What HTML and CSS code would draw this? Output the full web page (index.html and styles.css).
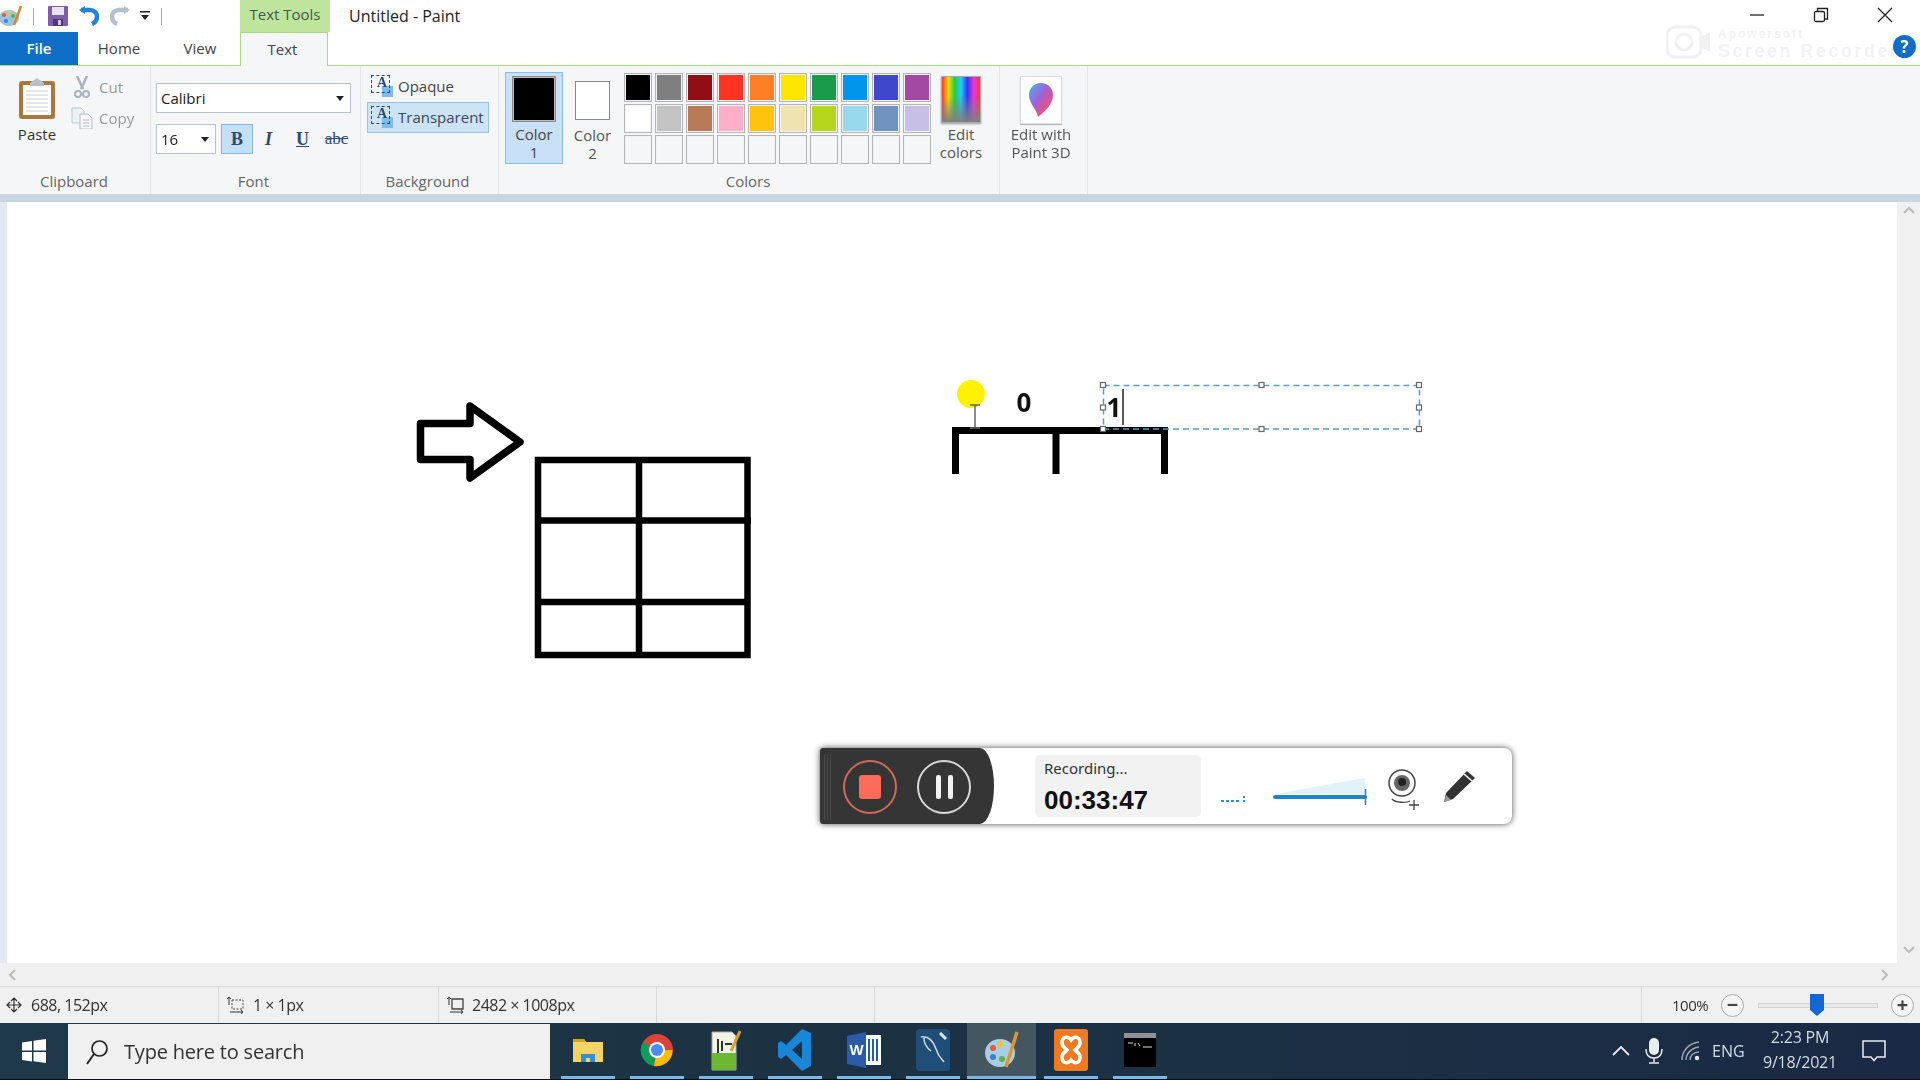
FILE: index.html
```html
<!DOCTYPE html>
<html lang="en">
<head>
<meta charset="utf-8">
<title>Untitled - Paint</title>
<link rel="stylesheet" href="styles.css">
</head>
<body>
<div class="app">
  <header class="titlebar">
    <div class="qat">
      <svg class="qi-paint" width="24" height="24" viewBox="0 0 24 24"><ellipse cx="10" cy="14" rx="10" ry="8" fill="#9cc3e0"/><circle cx="5" cy="11" r="2" fill="#e8563c"/><circle cx="10" cy="9" r="2" fill="#f2c230"/><circle cx="14" cy="12" r="2" fill="#5fb04a"/><circle cx="7" cy="17" r="2" fill="#3f7fd0"/><path d="M15 21 22 2" stroke="#d9882b" stroke-width="2.5"/></svg>
      <i class="qsep"></i>
      <svg class="qi-save" width="20" height="20" viewBox="0 0 20 20"><rect width="20" height="20" rx="1" fill="#7e5cae"/><rect x="4" y="1" width="12" height="8" fill="#e8e4f2"/><rect x="5" y="13" width="10" height="7" fill="#4e3a72"/><rect x="10" y="14" width="3" height="5" fill="#cfc8e0"/></svg>
      <svg class="qi-undo" width="20" height="20" viewBox="0 0 20 20"><path d="M2 4h9c4 0 7 3 7 6.500 0 3-2 6-5 7.500" fill="none" stroke="#2283dc" stroke-width="4.500"/><path d="M0 4 6 0v8z" fill="#2283dc"/></svg>
      <svg class="qi-redo" width="20" height="20" viewBox="0 0 20 20"><path d="M18 4H9C5 4 2 7 2 10.500c0 3 2 6 5 7.500" fill="none" stroke="#b4c0cc" stroke-width="4.500"/><path d="M20 4 14 0v8z" fill="#b4c0cc"/></svg>
      <svg class="qi-drop" width="10" height="11" viewBox="0 0 10 11"><rect y="0" width="10" height="1.500" fill="#222"/><path d="M1 4h8l-4 5z" fill="#222"/></svg>
      <i class="qsep qsep-b"></i>
    </div>
    <div class="context">Text Tools</div>
    <div class="doc-title">Untitled - Paint</div>
    <div class="winbtns">
      <svg width="16" height="16" viewBox="0 0 16 16"><path d="M1 8h14" stroke="#222" stroke-width="1.300"/></svg>
      <svg width="16" height="16" viewBox="0 0 16 16"><rect x="1.500" y="4.500" width="10" height="10" rx="1.500" fill="none" stroke="#222" stroke-width="1.300"/><path d="M4.500 4V1.500h10V12H12" fill="none" stroke="#222" stroke-width="1.300"/></svg>
      <svg width="16" height="16" viewBox="0 0 16 16"><path d="M1 1l14 14M15 1 1 15" stroke="#222" stroke-width="1.300"/></svg>
    </div>
  </header>

  <nav class="tabs">
    <div class="tab tab-file">File</div>
    <div class="tab tab-home">Home</div>
    <div class="tab tab-view">View</div>
    <div class="tab tab-text">Text</div>
    <div class="watermark"><svg width="46" height="38" viewBox="0 0 46 38"><rect x="1" y="2" width="34" height="30" rx="8" fill="none" stroke="#f1f1f1" stroke-width="3"/><circle cx="18" cy="17" r="8" fill="none" stroke="#f1f1f1" stroke-width="3"/><path d="M35 12l9-5v20l-9-5z" fill="#f1f1f1"/></svg><div class="wm-text"><span class="wm-a">Apowersoft</span><span class="wm-b">Screen Recorder</span></div></div>
    <div class="help">?</div>
  </nav>

  <section class="ribbon">
    <div class="group g-clip">
      <div class="gbody">
        <div class="paste">
          <svg width="38" height="42" viewBox="0 0 38 42"><rect x="1" y="4" width="36" height="38" rx="3" fill="#a9773f"/><rect x="5" y="8" width="28" height="30" fill="#fff"/><path d="M8 14h22M8 18h22M8 22h22M8 26h22M8 30h22M8 34h22" stroke="#c9ced6"/><path d="M12 6l7-5 7 5v3H12z" fill="#b9bec6"/></svg>
          <span>Paste</span>
        </div>
        <div class="clipcol">
          <div class="cliprow"><svg width="16" height="22" viewBox="0 0 16 22"><path d="M3 0l6 13M13 0 7 13" stroke="#aab4c0" stroke-width="2.500"/><circle cx="4" cy="18" r="3" fill="none" stroke="#aab4c0" stroke-width="2"/><circle cx="12" cy="18" r="3" fill="none" stroke="#aab4c0" stroke-width="2"/></svg><span>Cut</span></div>
          <div class="cliprow"><svg width="22" height="22" viewBox="0 0 22 22"><path d="M1 1h9l3 3v12H1z" fill="#eef1f5" stroke="#c0c8d2"/><path d="M9 7h8l4 4v11H9z" fill="#f6f7f9" stroke="#b4bcc8"/><path d="M12 13h6M12 16h6M12 19h6" stroke="#b4bcc8"/></svg><span>Copy</span></div>
        </div>
      </div>
      <div class="glabel">Clipboard</div>
    </div>

    <div class="group g-font">
      <div class="gbody gbody-col">
        <div class="combo combo-font"><span>Calibri</span><i class="caret"></i></div>
        <div class="fontrow">
          <div class="combo combo-size"><span>16</span><i class="caret"></i></div>
          <div class="fmt fmt-on fmt-b">B</div>
          <div class="fmt fmt-i">I</div>
          <div class="fmt fmt-u">U</div>
          <div class="fmt fmt-s">abc</div>
        </div>
      </div>
      <div class="glabel glabel-font">Font</div>
    </div>

    <div class="group g-bg">
      <div class="gbody gbody-col">
        <div class="bgrow"><span class="aicon">A</span><span>Opaque</span></div>
        <div class="bgrow bgrow-on"><span class="aicon">A</span><span>Transparent</span></div>
      </div>
      <div class="glabel glabel-bg">Background</div>
    </div>

    <div class="group g-colors">
      <div class="gbody">
        <div class="colbtn colbtn-on"><i class="sw sw-1"></i><span>Color<br>1</span></div>
        <div class="colbtn"><i class="sw sw-2"></i><span>Color<br>2</span></div>
        <div class="palette">
          <i class="c p1"></i><i class="c p2"></i><i class="c p3"></i><i class="c p4"></i><i class="c p5"></i><i class="c p6"></i><i class="c p7"></i><i class="c p8"></i><i class="c p9"></i><i class="c p10"></i>
          <i class="c p11"></i><i class="c p12"></i><i class="c p13"></i><i class="c p14"></i><i class="c p15"></i><i class="c p16"></i><i class="c p17"></i><i class="c p18"></i><i class="c p19"></i><i class="c p20"></i>
          <i class="c"></i><i class="c"></i><i class="c"></i><i class="c"></i><i class="c"></i><i class="c"></i><i class="c"></i><i class="c"></i><i class="c"></i><i class="c"></i>
        </div>
        <div class="editcol"><i class="rainbow"></i><span>Edit<br>colors</span></div>
      </div>
      <div class="glabel">Colors</div>
    </div>

    <div class="group g-3d">
      <div class="gbody">
        <div class="editcol edit3d">
          <div class="box3d"><svg width="26" height="36" viewBox="0 0 26 36"><defs><linearGradient id="drop" x1="0" y1="0" x2="1" y2="1"><stop offset="0" stop-color="#3fb4ee"/><stop offset=".45" stop-color="#a45fd6"/><stop offset=".75" stop-color="#f0507a"/><stop offset="1" stop-color="#f7a83a"/></linearGradient></defs><path d="M13 1C6 1 1 6 1 13c0 9 8 14 9 22 5-4 15-12 15-22C25 6 20 1 13 1z" fill="url(#drop)"/></svg></div>
          <span>Edit with<br>Paint 3D</span>
        </div>
      </div>
    </div>
  </section>
  <div class="ribbon-foot"></div>

  <main class="workspace">
    <div class="leftstrip"></div>
    <div class="canvas">
      <svg class="drawing" width="1890" height="761" viewBox="7 202 1890 761">
        <g fill="none" stroke="#000">
          <path d="M420.500 423.500H470V406l50 36-50 36v-18.500h-49.500z" stroke-width="7.500" stroke-linejoin="round"/>
          <path d="M538 460h209.500v195H538z" stroke-width="6.500"/>
          <path d="M639 460v195M538 520.500h213M541 602h206" stroke-width="6.500"/>
          <path d="M955.500 474V430.500h209V474M1056 430v44" stroke-width="7"/>
        </g>
        <circle cx="971" cy="394" r="14" fill="#fff200"/>
        <path d="M970 405h10M975 405v22M970 428h10" stroke="#666" stroke-width="1.500" fill="none"/>
        <text class="canvas-num" x="1024" y="412" text-anchor="middle">0</text>
        <text class="canvas-num" x="1114" y="417" text-anchor="middle">1</text>
        <path d="M1123 389v36" stroke="#222" stroke-width="1.500"/>
        <rect x="1103.500" y="385.500" width="316" height="43.500" fill="none" stroke="#5d9cc0" stroke-width="1.500" stroke-dasharray="6 4"/>
        <g fill="#fff" stroke="#666" stroke-width="1.200">
          <rect x="1100.500" y="382.500" width="5" height="5"/><rect x="1259" y="382.500" width="5" height="5"/><rect x="1416.500" y="382.500" width="5" height="5"/>
          <rect x="1100.500" y="405" width="5" height="5"/><rect x="1416.500" y="405" width="5" height="5"/>
          <rect x="1100.500" y="426.500" width="5" height="5"/><rect x="1259" y="426.500" width="5" height="5"/><rect x="1416.500" y="426.500" width="5" height="5"/>
        </g>
      </svg>
      <aside class="recorder">
        <div class="rec-dark">
          <i class="rec-grip"></i>
          <div class="rec-btn rec-stop"><i></i></div>
          <div class="rec-btn rec-pause"><i></i><i></i></div>
        </div>
        <div class="rec-info">
          <div class="rec-status">Recording...</div>
          <div class="rec-time">00:33:47</div>
        </div>
        <svg class="rec-tools" width="296" height="76" viewBox="1216 748 296 76">
          <path d="M1221 801h3M1226 801h3M1231 801h3M1236 801h3M1244 800v2M1244 796v2" stroke="#2a8fd0" stroke-width="2"/>
          <path d="M1275 794l90-16v16z" fill="#e3f1fa"/>
          <path d="M1275 797h90" stroke="#1a85c9" stroke-width="4" stroke-linecap="round"/>
          <path d="M1365.500 789v16" stroke="#1a85c9" stroke-width="1.500"/>
          <circle cx="1402" cy="783" r="13" fill="none" stroke="#444" stroke-width="1.500"/>
          <circle cx="1402" cy="783" r="8" fill="#666"/><circle cx="1402" cy="782" r="4" fill="#222"/>
          <path d="M1392 799c3 4 15 4 18 2M1409 805h10M1414 800v10" fill="none" stroke="#444" stroke-width="1.300"/>
          <path d="M1444 802l2-9 21-22 8 7-22 21z" fill="#333"/><path d="M1464 774l8 7" stroke="#fff" stroke-width="1.500"/><path d="M1444 802l2-7 5 5z" fill="#999"/>
        </svg>
      </aside>
    </div>
    <div class="vscroll">
      <svg width="12" height="8" viewBox="0 0 12 8"><path d="M1 7l5-5 5 5" fill="none" stroke="#bbb" stroke-width="2"/></svg>
      <svg width="12" height="8" viewBox="0 0 12 8"><path d="M1 1l5 5 5-5" fill="none" stroke="#bbb" stroke-width="2"/></svg>
    </div>
  </main>

  <div class="hscroll">
    <svg width="8" height="12" viewBox="0 0 8 12"><path d="M7 1 2 6l5 5" fill="none" stroke="#bbb" stroke-width="2"/></svg>
    <svg width="8" height="12" viewBox="0 0 8 12"><path d="M1 1l5 5-5 5" fill="none" stroke="#bbb" stroke-width="2"/></svg>
  </div>

  <footer class="status">
    <div class="st st-pos"><svg width="16" height="16" viewBox="0 0 16 16"><path d="M8 1v14M1 8h14M5 4l3-3 3 3M5 12l3 3 3-3M4 5 1 8l3 3M12 5l3 3-3 3" fill="none" stroke="#333" stroke-width="1.200"/></svg><span>688, 152px</span></div>
    <div class="st st-sel"><svg width="18" height="18" viewBox="0 0 18 18"><path d="M5 4h11v9H5z" fill="none" stroke="#444" stroke-dasharray="2 1.500"/><path d="M2 1v8M0 3l2-2 2 2M3 16h13M14 14l2 2-2 2" fill="none" stroke="#333"/></svg><span>1 × 1px</span></div>
    <div class="st st-size"><svg width="18" height="18" viewBox="0 0 18 18"><path d="M5 3h11v10H5z" fill="none" stroke="#444" stroke-width="1.300"/><path d="M2 1v8M0 3l2-2 2 2M3 16h13M14 14l2 2-2 2" fill="none" stroke="#333"/></svg><span>2482 × 1008px</span></div>
    <div class="st st-blank"></div>
    <div class="st st-zoom">
      <span class="zoomtxt">100%</span>
      <div class="zbtn">−</div>
      <div class="zslider"><svg class="zthumb" width="14" height="24" viewBox="0 0 14 24"><path d="M0 1h14v16l-7 6-7-6z" fill="#1468d6"/></svg></div>
      <div class="zbtn">+</div>
    </div>
  </footer>

  <div class="taskbar">
    <div class="startbtn"><svg width="24" height="24" viewBox="0 0 24 24"><path d="M0 3.500 10 2v9.500H0zM11.500 1.800 24 0v11.500H11.500zM0 13h10v9.500L0 21zM11.500 13H24v11l-12.500-1.800z" fill="#fff"/></svg></div>
    <div class="searchbox"><svg width="24" height="26" viewBox="0 0 24 26"><circle cx="14.500" cy="9.500" r="7.500" fill="none" stroke="#222" stroke-width="1.700"/><path d="M9 15 2 25" stroke="#222" stroke-width="1.900"/></svg><span>Type here to search</span></div>
    <div class="task">
      <svg width="32" height="32" viewBox="0 0 32 32"><path d="M1 5h11l2 3h17v20H1z" fill="#f6d365"/><path d="M1 5h11l2 3H1z" fill="#d9a322"/><path d="M9 28v-8h14v8h-5v-4h-4v4z" fill="#2f8fd8"/></svg>
    </div>
    <div class="task">
      <svg width="34" height="36" viewBox="0 0 34 34"><circle cx="17" cy="17" r="16" fill="#db4437"/><path d="M17 17 3 9A16 16 0 0 0 14 33z" fill="#0f9d58"/><path d="M17 17h15.500A16 16 0 0 1 14 33z" fill="#fbbc05"/><circle cx="17" cy="17" r="8" fill="#fff"/><circle cx="17" cy="17" r="6" fill="#4a8cf0"/></svg>
    </div>
    <div class="task">
      <svg width="30" height="42" viewBox="0 0 30 42"><path d="M1 3h20l4 4v34H1z" fill="#f2f4e8" stroke="#aaa"/><path d="M1 24h24v17H1z" fill="#6cb832"/><path d="M7 10v14M11 12v10M14 15h7" stroke="#333" stroke-width="2"/><path d="M20 22 29 2" stroke="#d8a02a" stroke-width="3"/></svg>
    </div>
    <div class="task">
      <svg width="34" height="42" viewBox="0 0 34 42"><path d="M24 0l9 4v33l-9 5L8 26 3 30l-3-2V14l3-2 5 4zM24 12l-10 9 10 9z" fill="#1a86d8"/></svg>
    </div>
    <div class="task">
      <svg width="34" height="36" viewBox="0 0 34 36"><rect x="12" y="3" width="22" height="30" fill="#fff"/><path d="M18 7v22M22 7v22M26 7v22M30 7v22" stroke="#2a5caa" stroke-width="2"/><path d="M0 4 19 0v36L0 32z" fill="#2a5caa"/><text class="word-w" x="9.500" y="23" text-anchor="middle">W</text></svg>
    </div>
    <div class="task">
      <svg width="34" height="42" viewBox="0 0 34 42"><rect width="34" height="42" rx="4" fill="#1f4f78"/><path d="M5 8c7-1 12 3 15 12s6 10 8 13M8 9c0 6 3 10 7 13" fill="none" stroke="#cfdbe6" stroke-width="1.500"/><path d="M24 4l6 6" stroke="#dfe7ee" stroke-width="3"/></svg>
    </div>
    <div class="task task-on">
      <svg width="34" height="42" viewBox="0 0 34 42"><ellipse cx="15" cy="24" rx="15" ry="14" fill="#a9cde4"/><circle cx="8" cy="19" r="3" fill="#e8563c"/><circle cx="15" cy="15" r="3" fill="#f2c230"/><circle cx="8" cy="28" r="3" fill="#3f7fd0"/><circle cx="17" cy="30" r="3" fill="#5fb04a"/><path d="M21 38 32 3" stroke="#e0962f" stroke-width="3.500"/></svg>
    </div>
    <div class="task">
      <svg width="34" height="42" viewBox="0 0 34 42"><rect width="34" height="42" rx="3" fill="#f07a22"/><path d="M8 14c0-7 6-7 9-3 3-4 9-4 9 3 0 4-4 6-5 7 1 1 5 3 5 7 0 7-6 7-9 3-3 4-9 4-9-3 0-4 4-6 5-7-1-1-5-3-5-7z" fill="none" stroke="#fff" stroke-width="3.500"/></svg>
    </div>
    <div class="task">
      <svg width="32" height="34" viewBox="0 0 32 34"><rect width="32" height="34" fill="#000"/><rect width="32" height="5" fill="#8e9296"/><path d="M4 10h5M11 10v3M14 10l2 3M19 14h9" stroke="#ddd"/></svg>
    </div>
    <div class="tray">
      <svg class="t-up" width="20" height="12" viewBox="0 0 20 12"><path d="M2 10l8-8 8 8" fill="none" stroke="#e8edf2" stroke-width="1.800"/></svg>
      <svg class="t-mic" width="18" height="26" viewBox="0 0 18 26"><rect x="4" y="0" width="10" height="17" rx="5" fill="#e8edf2"/><path d="M1 11c0 6 3 9 8 9s8-3 8-9M9 20v4M4 25h10" fill="none" stroke="#e8edf2" stroke-width="1.500"/></svg>
      <svg class="t-wifi" width="20" height="20" viewBox="0 0 20 20"><path d="M1 19C1 10 8 2 18 1M5 19c0-6 5-12 13-13M9 19c0-4 3-8 9-8" fill="none" stroke="#9aa6b2" stroke-width="1.500"/><circle cx="16" cy="17" r="2.200" fill="#e8edf2"/></svg>
      <span class="t-eng">ENG</span>
      <div class="t-clock"><span>2:23 PM</span><span>9/18/2021</span></div>
      <svg class="t-note" width="24" height="22" viewBox="0 0 24 22"><path d="M1 1h22v16H15l-3 3.500L9 17H1z" fill="none" stroke="#e8edf2" stroke-width="1.500"/></svg>
    </div>
  </div>
</div>
</body>
</html>
```
FILE: styles.css
```css
* { box-sizing: border-box; }
html, body { margin: 0; height: 100%; overflow: hidden; background: #fff; }
body { font-family: "Open Sans", "Noto Sans", sans-serif; color: #333; }
i { display: block; font-style: normal; }
svg { display: block; flex: none; }

.app { width: 1920px; height: 1080px; display: flex; flex-direction: column; filter: blur(0.6px); }

/* title bar */
.titlebar { height: 32px; display: flex; background: #fff; flex: none; }
.qat { width: 240px; display: flex; align-items: center; }
.qi-paint { margin-left: -1px; }
.qsep { width: 1px; height: 17px; background: #a8a8a8; margin-left: 10px; }
.qi-save { margin-left: 14px; }
.qi-undo { margin-left: 11px; }
.qi-redo { margin-left: 11px; }
.qi-drop { margin-left: 10px; }
.qsep-b { margin-left: 11px; }
.context { width: 90px; background: #bfe59c; color: #3f5a48; font-size: 15px; display: flex; align-items: center; justify-content: center; padding-bottom: 4px; }
.doc-title { margin-left: 19px; font-size: 16px; line-height: 32px; color: #222; }
.winbtns { margin-left: auto; display: flex; gap: 48px; padding: 7px 27px 0 0; height: 32px; }

/* tabs */
.tabs { height: 33px; display: flex; position: relative; background: #fff; flex: none; }
.tab { font-size: 15px; line-height: 33px; text-align: center; color: #444; }
.tab-file { width: 78px; background: #0f6fc6; color: #fff; font-weight: 600; }
.tab-home { width: 82px; }
.tab-view { width: 80px; }
.tab-text { width: 88px; background: #f5f6f7; border: 1px solid #a9d98a; border-bottom: 0; position: relative; z-index: 1; margin-bottom: -1px; height: 34px; padding-right: 3px; }
.watermark { position: absolute; left: 1666px; top: -7px; display: flex; gap: 6px; }
.wm-text { display: flex; flex-direction: column; color: #f2f2f2; font-family: "Liberation Sans", sans-serif; font-weight: 700; padding-top: 2px; }
.wm-a { font-size: 12px; line-height: 14px; letter-spacing: 2px; }
.wm-b { font-size: 18px; line-height: 21px; letter-spacing: 2.500px; white-space: nowrap; }
.help { position: absolute; left: 1893px; top: 3px; width: 23px; height: 23px; border-radius: 50%; background: #0f6fc6; color: #fff; font-weight: 700; font-size: 17px; line-height: 23px; text-align: center; }

/* ribbon */
.ribbon { height: 129px; background: #f5f6f7; border-top: 1px solid #a9d98a; display: flex; flex: none; font-size: 15px; }
.ribbon-foot { height: 8px; background: #c9d4e3; flex: none; }
.group { display: flex; flex-direction: column; border-right: 1px solid #e3e5e8; }
.gbody { flex: 1; display: flex; min-height: 0; }
.gbody-col { flex-direction: column; }
.glabel { height: 20px; margin-bottom: 3px; padding-right: 2px; text-align: center; font-size: 15px; line-height: 20px; color: #666; }
.glabel-font { margin-left: -9px; padding-right: 0; }
.glabel-bg { padding-right: 4px; }
.g-clip { width: 151px; }
.g-font { width: 210px; padding-left: 5px; }
.g-bg { width: 138px; }
.g-colors { width: 501px; }
.g-3d { width: 88px; }

.paste { width: 74px; display: flex; flex-direction: column; align-items: center; padding-top: 11px; }
.paste span { margin-top: 5px; line-height: 20px; }
.clipcol { padding-top: 5px; }
.cliprow { height: 31px; display: flex; align-items: center; color: #999; position: relative; padding-left: 25px; }
.cliprow svg { position: absolute; left: 0; top: 5px; }
.cliprow:last-child svg { left: -3px; }

.combo { background: #fff; border: 1px solid #b4c3d8; display: flex; align-items: center; padding-left: 4px; height: 30px; position: relative; color: #222; }
.combo-font { width: 195px; margin-top: 17px; }
.combo-size { width: 60px; }
.caret { position: absolute; right: 6px; top: 12px; border: 4px solid transparent; border-top: 5px solid #222; border-bottom: 0; }
.fontrow { display: flex; margin-top: 11px; }
.fmt { height: 30px; font-family: "Liberation Serif", serif; font-weight: 700; font-size: 18px; text-align: center; line-height: 30px; color: #2c4a72; }
.fmt-on { width: 32px; margin-left: 5px; background: #c5dff7; border: 1px solid #86b6e2; line-height: 28px; }
.fmt-i { font-style: italic; width: 31px; }
.fmt-u { text-decoration: underline; width: 37px; }
.fmt-s { text-decoration: line-through; font-size: 17px; width: 31px; font-weight: 400; }

.bgrow { height: 31px; display: flex; align-items: center; width: 122px; margin-left: 6px; padding-left: 4px; padding-bottom: 2px; gap: 5px; color: #444; }
.bgrow:first-child { margin-top: 5px; }
.bgrow-on { background: #cde3f8; border: 1px solid #97c1e8; padding-left: 3px; color: #3a4a5a; }
.aicon { width: 22px; height: 22px; font-family: "Liberation Serif", serif; font-weight: 700; font-size: 14px; line-height: 15px; text-align: center; position: relative; color: #2c4a72; background: linear-gradient(#7cbcf0, #7cbcf0) right bottom / 11px 11px no-repeat; }
.aicon::after { content: ""; position: absolute; left: 0; top: 0; width: 17px; height: 16px; border: 1px dashed #2c4a72; }

.colbtn { width: 59px; height: 92px; margin-top: 6px; display: flex; flex-direction: column; align-items: center; line-height: 18px; text-align: center; color: #555; }
.colbtn span { margin-top: 2px; }
.colbtn-on { margin-left: 6px; width: 58px; background: #c9e1f8; border: 1px solid #8dbce6; padding-top: 3px; color: #444; }
.colbtn-on span { margin-top: 3px; }
.sw { border: 1px solid #888; padding: 0; }
.sw-1 { width: 44px; height: 46px; background: #000; box-shadow: inset 0 0 0 1px #bbb; }
.sw-2 { width: 35px; height: 39px; margin-top: 9px; background: #fff; margin-bottom: 4px; }
.palette { display: grid; grid-template-columns: repeat(10, 28px); grid-auto-rows: 29px; gap: 2px 3px; margin: 7px 0 0 2px; align-content: start; }
.c { border: 1px solid #b5b5b5; box-shadow: inset 0 0 0 1px #f2f3f5; background: #f5f6f7; }
.p1 { background: #000; } .p2 { background: #7f7f7f; } .p3 { background: #8f0f15; } .p4 { background: #ff3322; } .p5 { background: #ff7f27; }
.p6 { background: #ffe600; } .p7 { background: #1a9b4c; } .p8 { background: #0095e8; } .p9 { background: #3f48cc; } .p10 { background: #a349a4; }
.p11 { background: #fff; } .p12 { background: #c3c3c3; } .p13 { background: #b97a57; } .p14 { background: #ffaec9; } .p15 { background: #ffc20e; }
.p16 { background: #efe4b0; } .p17 { background: #b5d61d; } .p18 { background: #99d9ee; } .p19 { background: #7092be; } .p20 { background: #c8bfe7; }
.editcol { width: 60px; display: flex; flex-direction: column; align-items: center; line-height: 18px; text-align: center; color: #555; padding-top: 10px; }
.editcol span { margin-top: 2px; }
.rainbow { width: 40px; height: 47px; border: 1px solid #aaa; box-shadow: 0 1px 2px #999; background: linear-gradient(rgba(255,255,255,0) 40%, #808080 100%), linear-gradient(90deg, #f33, #fd0, #2c4, #2cf, #33e, #e3d, #f33); }
.edit3d { width: 82px; padding-top: 10px; }
.edit3d span { white-space: nowrap; margin-top: 1px; }
.box3d { width: 42px; height: 48px; background: #fff; border: 1px solid #ddd; box-shadow: 0 1px 1px #bbb; display: flex; align-items: center; justify-content: center; }

/* workspace */
.workspace { flex: 1; display: flex; min-height: 0; }
.leftstrip { width: 7px; background: #dfe8f3; }
.canvas { flex: 1; background: #fff; position: relative; }
.drawing { position: absolute; left: 0; top: 0; }
.canvas-num { font-family: "Noto Sans", sans-serif; font-weight: 700; font-size: 26px; fill: #111; }
.vscroll { width: 23px; background: #f0f0f0; display: flex; flex-direction: column; justify-content: space-between; align-items: center; padding: 4px 0 9px; }
.hscroll { height: 23px; background: #f0f0f0; display: flex; justify-content: space-between; align-items: center; padding: 0 31px 0 8px; flex: none; }

/* recorder */
.recorder { position: absolute; left: 813px; top: 546px; width: 692px; height: 76px; background: #fff; border-radius: 3px 8px 8px 3px; box-shadow: 0 0 6px rgba(0,0,0,.7); display: flex; }
.rec-dark { width: 174px; background: #353535; border-radius: 3px 14px 14px 3px / 3px 50% 50% 3px; display: flex; gap: 20px; align-items: center; padding-left: 4px; padding-top: 1px; }
.rec-grip { width: 7px; height: 66px; margin-right: -8px; background: repeating-linear-gradient(90deg, #4a4a4a 0 1px, transparent 1px 3px); }
.rec-btn { width: 54px; height: 54px; border-radius: 50%; border: 2px solid #d8d8d8; display: flex; align-items: center; justify-content: center; gap: 7px; }
.rec-stop { border-color: #d06a5c; }
.rec-stop i { width: 22px; height: 24px; border-radius: 3px; background: #ff6a5a; }
.rec-pause i { width: 5px; height: 24px; border-radius: 2px; background: #f2f2f2; }
.rec-info { width: 166px; height: 62px; margin: 7px 0 0 41px; background: #f2f2f2; border-radius: 5px; padding: 3px 0 0 9px; }
.rec-status { font-family: "Noto Sans", sans-serif; font-size: 15px; line-height: 20px; color: #333; }
.rec-time { font-family: "Liberation Sans", sans-serif; font-weight: 700; font-size: 26px; line-height: 30px; margin-top: 7px; color: #111; }
.rec-tools { margin-left: 15px; }

/* status */
.status { height: 37px; background: #f0f0f0; border-top: 1px solid #dcdcdc; display: flex; flex: none; font-size: 16px; color: #333; letter-spacing: -.5px; }
.st { display: flex; align-items: center; border-right: 1px solid #d9d9d9; height: 36px; }
.st-pos { width: 219px; padding-left: 6px; gap: 9px; }
.st-sel { width: 220px; padding-left: 8px; gap: 8px; }
.st-size { width: 218px; padding-left: 8px; gap: 7px; }
.st-blank { width: 218px; }
.st-zoom { flex: 1; border-right: 0; padding-left: 30px; margin-left: 766px; border-left: 1px solid #d9d9d9; font-size: 15px; }
.zoomtxt { width: 49px; }
.zbtn { width: 23px; height: 23px; border-radius: 50%; border: 1px solid #aaa; text-align: center; font-size: 20px; font-weight: 700; line-height: 19px; color: #444; background: #f4f4f4; letter-spacing: 0; }
.zslider { width: 120px; height: 5px; margin: 0 13px 0 14px; background: #e8e8e8; border: 1px solid #d4d4d4; position: relative; }
.zthumb { position: absolute; left: 51px; top: -11px; }

/* taskbar */
.taskbar { height: 57px; flex: none; display: flex; background: linear-gradient(90deg, #1e3949 0, #1c3242 40%, #1c3044 65%, #1a2945 100%); border-bottom: 1px solid #0b0f14; position: relative; }
.startbtn { width: 68px; display: flex; align-items: center; justify-content: center; }
.searchbox { width: 482px; margin-top: 1px; background: #f0f0f0; display: flex; align-items: center; gap: 15px; padding-left: 17px; font-size: 20px; color: #333; }
.searchbox span { letter-spacing: -.2px; }
.task { width: 69px; display: flex; align-items: center; justify-content: center; position: relative; padding-bottom: 3px; }
.task::after { content: ""; position: absolute; left: 8px; right: 7px; bottom: 0; height: 3px; background: #76b9ed; }
.task-on { background: #44565f; }
.task-on::after { left: 0; right: 0; }
.searchbox + .task { margin-left: 3px; }
.word-w { font-family: "Liberation Sans", sans-serif; font-weight: 700; font-size: 15px; fill: #fff; }
.tray { position: absolute; right: 0; top: 0; height: 56px; width: 309px; display: flex; align-items: center; color: #d5dce4; }
.t-up { margin-left: 0; }
.t-mic { margin-left: 14px; }
.t-wifi { margin-left: 18px; }
.t-eng { margin-left: 11px; font-size: 16px; width: 38px; }
.t-clock { margin-left: 3px; width: 94px; display: flex; flex-direction: column; align-items: center; font-size: 16px; line-height: 25px; letter-spacing: -.2px; margin-top: -2px; }
.t-note { margin-left: 15px; }
```
